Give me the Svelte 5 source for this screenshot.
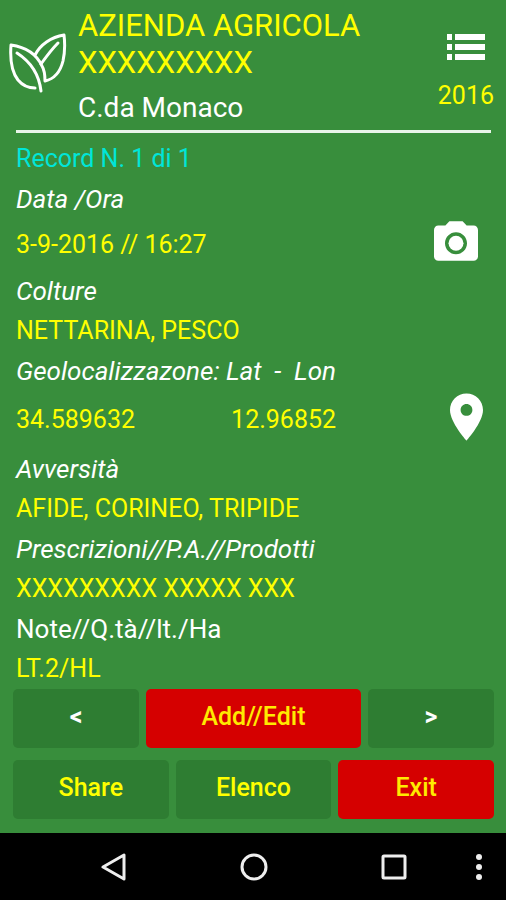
<script>
  let records = $state([
    {
      date: '3-9-2016',
      time: '16:27',
      crops: ['NETTARINA', 'PESCO'],
      lat: '34.589632',
      lon: '12.96852',
      pests: ['AFIDE', 'CORINEO', 'TRIPIDE'],
      products: 'XXXXXXXXX XXXXX XXX',
      notes: 'LT.2/HL',
    },
  ]);
  let index = $state(0);
  let record = $derived(records[index]);

  function move(step) {
    const next = index + step;
    if (next >= 0 && next < records.length) index = next;
  }
</script>

<div class="screen">
  <header>
    <svg class="logo" viewBox="0 0 58 60" aria-hidden="true">
      <path d="M26 22C31 12 42 4 55 2C56 10 56 19 54 28C51 40 45 46 36 48C36 44 36 38 33 33C27 20 16 14 2 12C1 25 2 38 9 47C14 53 20 55 26 55" />
      <path d="M8 20C22 29 30 41 32 58" />
      <path d="M49 10C43 16 37 24 32 31" />
    </svg>
    <div class="farm">
      <h1>AZIENDA AGRICOLA XXXXXXXXX</h1>
      <p>C.da Monaco</p>
    </div>
    <div class="side">
      <button class="icon" aria-label="Menu">
        <svg width="38" height="28" viewBox="0 0 38 28">
          <path d="M0 0h5v6H0zM8 0h30v6H8zM0 10h5v6H0zM8 10h30v6H8zM0 20h5v6H0zM8 20h30v6H8z" />
        </svg>
      </button>
      <span>2016</span>
    </div>
  </header>

  <main>
    <p class="count">Record N. {index + 1} di {records.length}</p>
    <dl>
      <dt>Data /Ora</dt>
      <dd class="row date">
        <span>{record.date} // {record.time}</span>
        <button class="icon" aria-label="Foto">
          <svg width="44" height="44" viewBox="2 1 20 20">
            <path fill-rule="evenodd" d="M9 2L7.17 4H4c-1.1 0-2 .9-2 2v12c0 1.1.9 2 2 2h16c1.1 0 2-.9 2-2V6c0-1.1-.9-2-2-2h-3.17L15 2H9zm3 15c-2.76 0-5-2.24-5-5s2.24-5 5-5 5 2.24 5 5-2.24 5-5 5z" />
            <circle cx="12" cy="12" r="3.4" />
          </svg>
        </button>
      </dd>
      <dt>Colture</dt>
      <dd>{record.crops.join(', ')}</dd>
      <dt>Geolocalizzazone: Lat&nbsp; -&nbsp; Lon</dt>
      <dd class="row place">
        <span class="lat">{record.lat}</span>
        <span>{record.lon}</span>
        <button class="icon" aria-label="Posizione">
          <svg width="33" height="52" viewBox="5 1 14 22">
            <path fill-rule="evenodd" d="M12 2C8.13 2 5 5.13 5 9c0 5.25 7 13 7 13s7-7.75 7-13c0-3.87-3.13-7-7-7zm0 9.5c-1.38 0-2.5-1.12-2.5-2.5s1.12-2.5 2.5-2.5 2.5 1.12 2.5 2.5-1.12 2.5-2.5 2.5z" />
          </svg>
        </button>
      </dd>
      <dt>Avversità</dt>
      <dd>{record.pests.join(', ')}</dd>
      <dt>Prescrizioni//P.A.//Prodotti</dt>
      <dd>{record.products}</dd>
      <dt class="plain">Note//Q.tà//lt./Ha</dt>
      <dd>{record.notes}</dd>
    </dl>
  </main>

  <div class="actions pager">
    <button class="arrow" onclick={() => move(-1)}>&lt;</button>
    <button class="red">Add//Edit</button>
    <button class="arrow" onclick={() => move(1)}>&gt;</button>
  </div>
  <div class="actions">
    <button>Share</button>
    <button>Elenco</button>
    <button class="red">Exit</button>
  </div>

  <nav>
    <button aria-label="Indietro">
      <svg width="28" height="28" viewBox="0 0 28 28"><path d="M24 2V26L3 14Z" /></svg>
    </button>
    <button aria-label="Home">
      <svg width="28" height="28" viewBox="0 0 28 28"><circle cx="14" cy="14" r="12" /></svg>
    </button>
    <button aria-label="Recenti">
      <svg width="28" height="28" viewBox="0 0 28 28"><rect x="3" y="3" width="22" height="22" rx="1" /></svg>
    </button>
    <button aria-label="Altro">
      <svg class="dots" width="28" height="28" viewBox="0 0 28 28">
        <circle cx="14" cy="4" r="3" />
        <circle cx="14" cy="14" r="3" />
        <circle cx="14" cy="24" r="3" />
      </svg>
    </button>
  </nav>
</div>

<style>
  :global(body) { margin: 0; background: #388e3c; }
  .screen {
    display: flex;
    flex-direction: column;
    min-height: 100vh;
    background: #388e3c;
    color: #fff;
    font: 25px/40px Roboto, sans-serif;
  }
  h1, p, dl, dd { margin: 0; }
  button { border: 0; padding: 0; font: inherit; cursor: pointer; }
  svg { display: block; }

  header {
    display: flex;
    align-items: flex-start;
    margin: 0 15px 0 16px;
    padding-top: 7px;
    border-bottom: 3px solid #e8f5e9;
  }
  .logo {
    flex: none;
    width: 58px;
    height: 60px;
    margin: 26px 11px 0 -7px;
    fill: none;
    stroke: #fff;
    stroke-width: 3;
    stroke-linecap: round;
    stroke-linejoin: round;
  }
  .farm { flex: 1; }
  .farm h1 { max-width: 340px; font-size: 31px; font-weight: 400; line-height: 37px; color: #ff0; }
  .farm p { margin-top: 4px; font-size: 28px; line-height: 45px; }
  .side {
    display: flex;
    flex-direction: column;
    align-items: center;
    gap: 14px;
    margin: 27px -3px 0 0;
    color: #ff0;
  }

  .icon { background: none; }
  .icon svg { fill: #fff; }

  main { padding: 6px 12px 0 16px; }
  .count { color: #00e5d8; }
  dt { font-size: 26px; font-style: italic; }
  dt.plain { font-style: normal; }
  dd { color: #ff0; }
  .row { display: flex; align-items: flex-start; }
  .row .icon { display: flex; align-items: flex-start; margin-left: auto; }
  .date { line-height: 52px; }
  .date .icon { height: 52px; padding-right: 16px; }
  .place { line-height: 58px; }
  .place .icon { height: 58px; padding-right: 11px; }
  .lat { width: 45%; }

  .actions {
    display: grid;
    grid-template-columns: 1fr 1fr 1fr;
    gap: 7px;
    padding: 0 12px 14px 13px;
  }
  .pager { grid-template-columns: 10fr 17fr 10fr; padding-bottom: 12px; }
  .actions button {
    height: 59px;
    padding-bottom: 4px;
    border-radius: 5px;
    background: #2e7d32;
    color: #ff0;
    font-weight: 500;
  }
  .actions .red { background: #d50000; color: #ffea00; }
  .actions .arrow { color: #fff; font-weight: 700; }

  nav {
    display: grid;
    grid-template-columns: 1fr 1fr 1fr 30px;
    flex: 1;
    min-height: 67px;
    padding: 0 12px 0 44px;
    background: #000;
  }
  nav button { display: flex; align-items: center; justify-content: center; background: none; }
  nav svg { fill: none; stroke: #eee; stroke-width: 3; stroke-linejoin: round; }
  nav .dots { fill: #eee; stroke: none; }
</style>
